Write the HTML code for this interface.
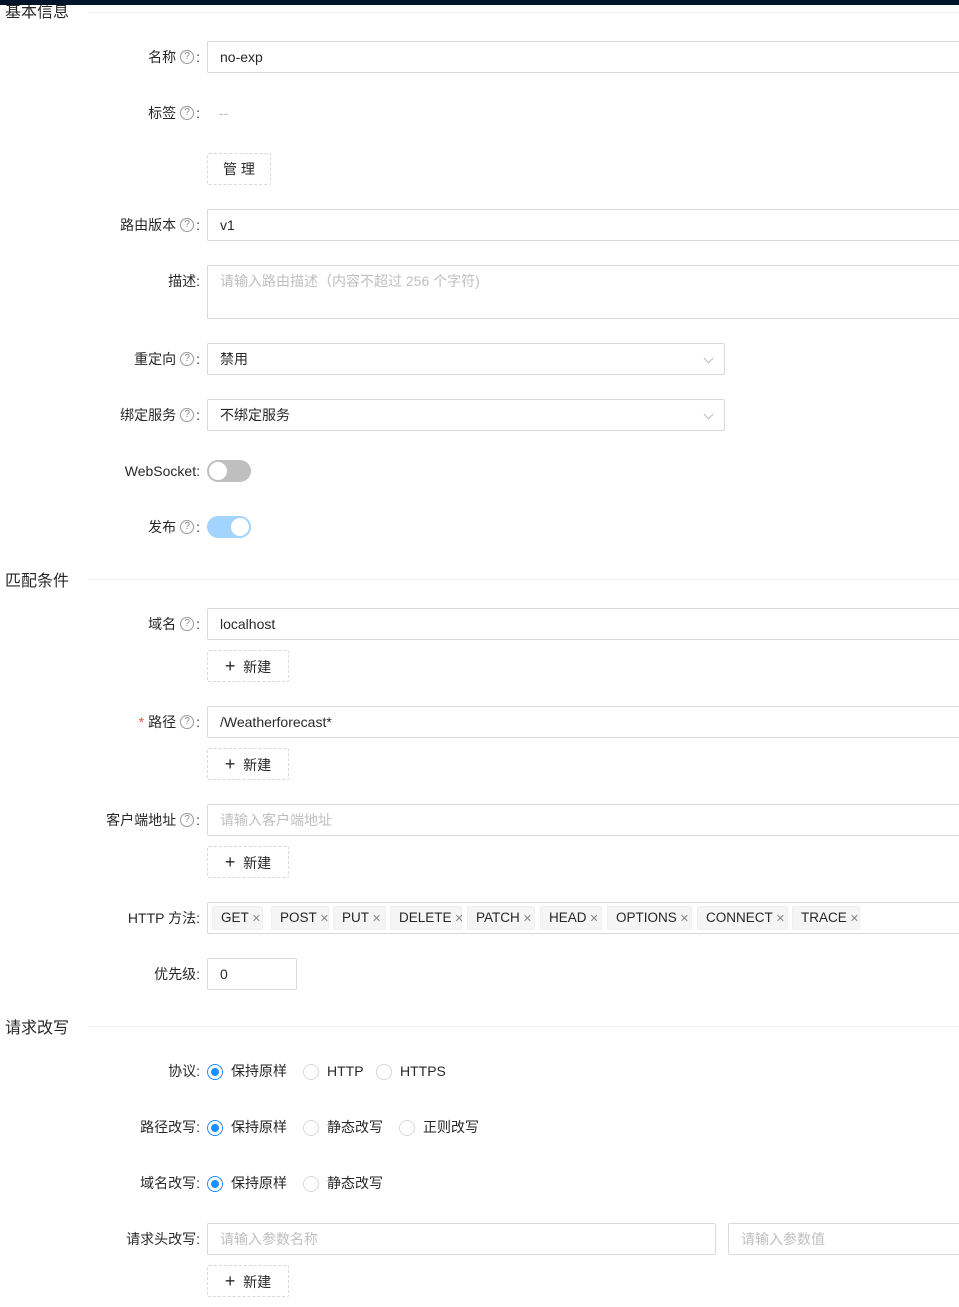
<!DOCTYPE html><html><head><meta charset="utf-8"><style>
*{box-sizing:border-box;margin:0;padding:0}
body{width:959px;height:1307px;overflow:hidden;background:#fff;position:relative;font-family:"Liberation Sans","Noto Sans CJK SC",sans-serif;font-size:14px;color:rgba(0,0,0,.85)}
.a{position:absolute}
.lbl{position:absolute;right:759px;height:20px;line-height:20px;white-space:nowrap;display:flex;align-items:center;justify-content:flex-end}
.q{display:inline-block;width:14px;height:14px;border:1px solid #999;border-radius:50%;font-size:10px;line-height:12px;text-align:center;color:#888;margin:0 2px 0 4px}
.inp{position:absolute;left:207px;height:32px;border:1px solid #d9d9d9;border-radius:2px;padding:0 12px;line-height:30px;white-space:nowrap}
.ph{color:#bfbfbf}
.btn{position:absolute;left:207px;height:32px;border:1px dashed #d9d9d9;border-radius:2px;line-height:30px;text-align:center}
.sec{position:absolute;left:5px;font-size:16px;line-height:20px}
.line{position:absolute;left:88px;right:0;height:1px;background:#f0f0f0}
.tag{position:absolute;top:906px;height:24px;background:#f5f5f5;border:1px solid #f0f0f0;border-radius:2px;line-height:22px;padding-left:8px;font-size:13.5px;white-space:nowrap}
.tag i{font-style:normal;color:#888;font-size:11px;margin-left:3px}
.r{position:absolute;width:16px;height:16px;border:1px solid #d9d9d9;border-radius:50%}
.r.on{border-color:#1890ff}
.r.on:after{content:"";position:absolute;left:3px;top:3px;width:8px;height:8px;border-radius:50%;background:#1890ff}
.rt{position:absolute;line-height:20px}
.chev{position:absolute;right:12px;top:11px;width:7px;height:7px;border-right:1px solid #bbb;border-bottom:1px solid #bbb;transform:rotate(45deg)}
</style></head><body>
<div class="a" style="left:0;top:0;width:959px;height:5px;background:#001529"></div>
<div class="sec" style="top:3px">基本信息</div><div class="line" style="top:12px"></div>

<div class="lbl" style="top:47px">名称<span class="q">?</span>:</div>
<div class="inp" style="top:41px;width:760px">no-exp</div>
<div class="lbl" style="top:103px">标签<span class="q">?</span>:</div>
<div class="a ph" style="left:219px;top:103px;line-height:20px">--</div>
<div class="btn" style="top:153px;width:64px">管 理</div>
<div class="lbl" style="top:215px">路由版本<span class="q">?</span>:</div>
<div class="inp" style="top:209px;width:760px">v1</div>
<div class="lbl" style="top:271px">描述:</div>
<div class="inp ph" style="top:265px;width:760px;height:54px;padding-top:0">请输入路由描述（内容不超过 256 个字符)</div>
<div class="lbl" style="top:349px">重定向<span class="q">?</span>:</div>
<div class="inp" style="top:343px;width:518px">禁用<span class="chev"></span></div>
<div class="lbl" style="top:405px">绑定服务<span class="q">?</span>:</div>
<div class="inp" style="top:399px;width:518px">不绑定服务<span class="chev"></span></div>
<div class="lbl" style="top:461px">WebSocket:</div>
<div class="a" style="left:207px;top:460px;width:44px;height:22px;border-radius:11px;background:#bfbfbf"><div class="a" style="left:2px;top:2px;width:18px;height:18px;border-radius:50%;background:#fff"></div></div>
<div class="lbl" style="top:517px">发布<span class="q">?</span>:</div>
<div class="a" style="left:207px;top:516px;width:44px;height:22px;border-radius:11px;background:#a3d3ff"><div class="a" style="left:24px;top:2px;width:18px;height:18px;border-radius:50%;background:#fff"></div></div>

<div class="sec" style="top:572px">匹配条件</div><div class="line" style="top:579px"></div>
<div class="lbl" style="top:614px">域名<span class="q">?</span>:</div>
<div class="inp" style="top:608px;width:760px">localhost</div>
<div class="btn" style="top:650px;width:82px"><b style="font-size:18px;font-weight:normal">+</b>&nbsp; 新建</div>
<div class="lbl" style="top:712px"><span style="color:#ff4d4f;margin-right:4px">*</span>路径<span class="q">?</span>:</div>
<div class="inp" style="top:706px;width:760px">/Weatherforecast*</div>
<div class="btn" style="top:748px;width:82px"><b style="font-size:18px;font-weight:normal">+</b>&nbsp; 新建</div>
<div class="lbl" style="top:810px">客户端地址<span class="q">?</span>:</div>
<div class="inp ph" style="top:804px;width:760px">请输入客户端地址</div>
<div class="btn" style="top:846px;width:82px"><b style="font-size:18px;font-weight:normal">+</b>&nbsp; 新建</div>
<div class="lbl" style="top:908px">HTTP 方法:</div>
<div class="inp" style="top:902px;width:760px"></div>
<div class="tag" style="left:212px;width:51px">GET<i>✕</i></div>
<div class="tag" style="left:271px;width:58px">POST<i>✕</i></div>
<div class="tag" style="left:333px;width:53px">PUT<i>✕</i></div>
<div class="tag" style="left:390px;width:72px">DELETE<i>✕</i></div>
<div class="tag" style="left:467px;width:68px">PATCH<i>✕</i></div>
<div class="tag" style="left:540px;width:62px">HEAD<i>✕</i></div>
<div class="tag" style="left:607px;width:85px">OPTIONS<i>✕</i></div>
<div class="tag" style="left:697px;width:91px">CONNECT<i>✕</i></div>
<div class="tag" style="left:792px;width:68px">TRACE<i>✕</i></div>
<div class="lbl" style="top:964px">优先级:</div>
<div class="inp" style="top:958px;width:90px">0</div>

<div class="sec" style="top:1019px">请求改写</div><div class="line" style="top:1026px"></div>
<div class="lbl" style="top:1061px">协议:</div>
<div class="r on" style="left:207px;top:1064px"></div><div class="rt" style="left:231px;top:1061px">保持原样</div>
<div class="r" style="left:303px;top:1064px"></div><div class="rt" style="left:327px;top:1061px">HTTP</div>
<div class="r" style="left:376px;top:1064px"></div><div class="rt" style="left:400px;top:1061px">HTTPS</div>
<div class="lbl" style="top:1117px">路径改写:</div>
<div class="r on" style="left:207px;top:1120px"></div><div class="rt" style="left:231px;top:1117px">保持原样</div>
<div class="r" style="left:303px;top:1120px"></div><div class="rt" style="left:327px;top:1117px">静态改写</div>
<div class="r" style="left:399px;top:1120px"></div><div class="rt" style="left:423px;top:1117px">正则改写</div>
<div class="lbl" style="top:1173px">域名改写:</div>
<div class="r on" style="left:207px;top:1176px"></div><div class="rt" style="left:231px;top:1173px">保持原样</div>
<div class="r" style="left:303px;top:1176px"></div><div class="rt" style="left:327px;top:1173px">静态改写</div>
<div class="lbl" style="top:1229px">请求头改写:</div>
<div class="inp ph" style="top:1223px;width:509px">请输入参数名称</div>
<div class="inp ph" style="top:1223px;left:728px;width:300px">请输入参数值</div>
<div class="btn" style="top:1265px;width:82px"><b style="font-size:18px;font-weight:normal">+</b>&nbsp; 新建</div>
</body></html>
